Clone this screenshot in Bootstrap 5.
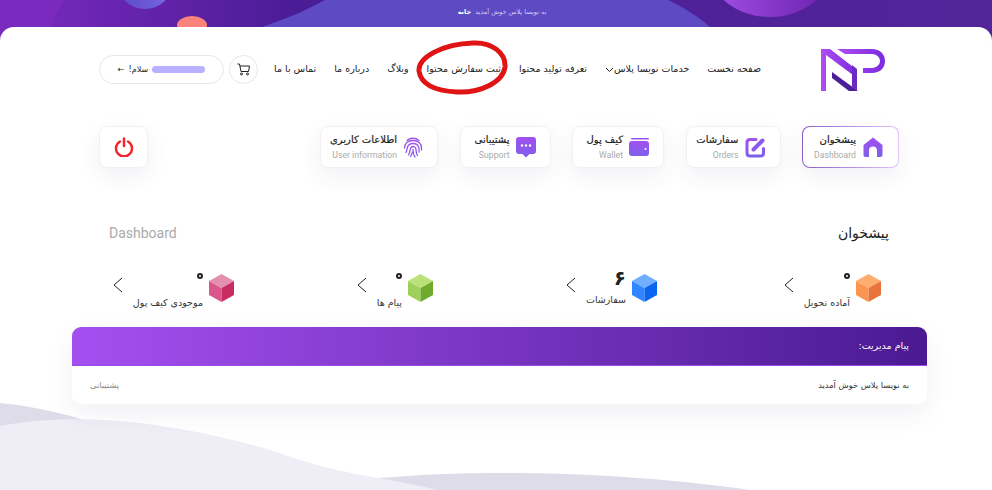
<!DOCTYPE html>
<html lang="fa" dir="rtl">
<head>
  <meta charset="UTF-8">
  <meta name="viewport" content="width=device-width, initial-scale=1.0">
  <title>نویسا پلاس</title>
  <link href="https://cdn.jsdelivr.net/npm/bootstrap@5.3.0/dist/css/bootstrap.min.css" rel="stylesheet">
  <style>
    html, body { height: 490px; overflow: hidden; }
    body {
      font-family: "DejaVu Sans", "Noto Sans", sans-serif;
      color: #222;
      background: linear-gradient(90deg, #7b2abf 0%, #4a1c96 30%, #52259b 100%);
    }
    .top-band { height: 27px; position: relative; overflow: hidden; }
    .band-art { position: absolute; inset: 0; width: 100%; height: 100%; }
    .band-text { position: relative; height: 25px; padding-left: 12px; font-size: 6.5px; color: #d5cff0; }
    .band-text b { color: #fff; }
    .panel {
      height: 463px;
      background: #fff;
      border-radius: 14px 14px 0 0;
      position: relative;
      overflow: hidden;
    }
    .waves { position: absolute; left: 0; bottom: 0; }
    .inner { position: relative; width: 800px; margin-left: 99px; margin-right: 93px; }
    .head-row { height: 71px; padding-top: 21px; }
    .site-logo { margin-left: 60px; margin-right: 13px; }
    .site-nav a { color: #222; font-size: 9.5px; text-decoration: none; white-space: nowrap; }
    .site-nav { gap: 18px; height: 29px; margin-top: 7px; position: relative; }
    .head-tools { gap: 5px; margin-top: 7px; }
    .round-cart {
      width: 29px; height: 29px; border: 1px solid #e6e6e6; border-radius: 50%;
      background: #fff; padding: 0;
    }
    .user-pill {
      width: 125px; height: 29px; border: 1px solid #e6e6e6; border-radius: 15px;
      background: #fff; font-size: 8px; color: #222; padding: 0;
    }
    .blur-name {
      width: 53px; height: 7px;
      background: #b9b0ff; border-radius: 4px; filter: blur(.6px);
    }
    .red-ring { position: absolute; left: 415px; top: 13px; pointer-events: none; }
    .tile-row { margin-top: 28px; gap: 21.5px; }
    .tile {
      height: 42px; background: #fff; border: 1px solid #f1f1f4; border-radius: 8px;
      box-shadow: 0 8px 22px rgba(60, 50, 110, .07);
      text-decoration: none; padding: 0 14px 0 4px; gap: 6px;
    }
    .tile.on {
      border: 1.5px solid transparent;
      background: linear-gradient(#fff, #fff) padding-box, linear-gradient(90deg, #8a5cc8, #e0c4fa) border-box;
    }
    .tile-fa { font-size: 10px; color: #222; line-height: 14px; white-space: nowrap; -webkit-text-stroke: .2px #222; }
    .tile-en { font-family: Roboto, sans-serif; font-size: 8.7px; color: #aaa; line-height: 12px; margin-top: 2px; white-space: nowrap; }
    .tile-off { width: 49px; margin-right: auto; justify-content: center; padding: 0; }
    .title-row { margin-top: 53px; padding: 0 10px; height: 24px; }
    .title-fa { font-size: 14px; color: #222; margin: 0; }
    .title-en { font-family: Roboto, sans-serif; font-size: 14px; color: #aaa; }
    .stat-row { margin-top: 23px; height: 40px; padding-right: 18px; }
    .stat-a { width: 224px; }
    .stat-b { width: 199px; }
    .stat-one { gap: 6px; }
    .stat-num { font-size: 20px; font-weight: 700; line-height: 16px; height: 24px; }
    .stat-zero { display: block; width: 6px; height: 6px; border: 2px solid #222; border-radius: 50%; margin-top: 6px; }
    .stat-lab { font-size: 9.500px; color: #333; line-height: 12px; white-space: nowrap; }
    .stat-go { margin-right: 4px; margin-bottom: 6px; }
    .note-card {
      margin: 19px -28px 0 0; width: 855px; height: 77px; border: 0; border-radius: 9px;
      box-shadow: 0 10px 26px rgba(60, 50, 110, .07); overflow: hidden;
    }
    .note-head {
      height: 39px; padding: 0 18px; font-size: 9.500px; color: #fff; border-bottom: 1px solid #9a4be4;
      background: linear-gradient(270deg, #4a1a92 0%, #a54ff0 100%);
    }
    .note-body { height: 38px; padding: 0 18px; font-size: 8.300px; color: #333; }
    .note-body span + span { color: #888; }
  </style>
</head>
<body>
  <div class="top-band">
    <svg class="band-art" viewBox="0 0 992 27" preserveAspectRatio="none">
      <defs>
        <linearGradient id="ballRight" x1="0" x2="1"><stop offset="0" stop-color="#a34fe6"/><stop offset="1" stop-color="#6a22ad"/></linearGradient>
        <linearGradient id="ballLeft" x1="0" x2="1"><stop offset="0" stop-color="#5a4bc4"/><stop offset="1" stop-color="#7a66e0"/></linearGradient>
        <linearGradient id="tileGrad" x1="0" x2="0" y1="0" y2="1"><stop offset="0" stop-color="#a24ff0"/><stop offset="1" stop-color="#7d60ea"/></linearGradient>
      </defs>
      <path d="M0 27V0H64C58 10 54 20 52 27Z" fill="#7b2abf"/>
      <path d="M262 27C290 18 310 8 325 0H668C685 8 700 18 710 27Z" fill="#5e4bc4"/>
      <ellipse cx="145" cy="-14" rx="26" ry="23" fill="url(#ballLeft)"/>
      <ellipse cx="770" cy="-30" rx="60" ry="47" fill="url(#ballRight)"/>
      <ellipse cx="192" cy="25" rx="15" ry="9" fill="#f9837c"/>
    </svg>
    <div class="band-text d-flex align-items-center justify-content-center gap-1">
      <span>به نویسا پلاس خوش آمدید</span><b>خانه</b>
    </div>
  </div>

  <div class="panel">
    <svg class="waves" width="992" height="90" viewBox="0 400 992 90">
      <path d="M0 403C30 406 60 412 90 422L100 490H0Z" fill="#dfdcea"/>
      <path d="M380 490V478C470 470 610 470 750 490Z" fill="#dfdcea"/>
      <path d="M0 426C40 418 90 417 140 423C200 431 250 442 300 460C350 476 400 480 437 490H0Z" fill="#efedf5"/>
    </svg>

    <div class="inner">
      <div class="head-row d-flex align-items-start">
        <a class="site-logo" href="#">
          <svg width="65" height="44" viewBox="0 0 65 44">
            <defs><linearGradient id="logoGrad" x1="0" x2="1"><stop offset="0" stop-color="#b14df0"/><stop offset="1" stop-color="#7a2be0"/></linearGradient></defs>
            <path d="M0 1H9L36 22V30L5 7V43H0Z" fill="url(#logoGrad)"/>
            <path d="M11 24L37 43H28L11 30Z" fill="#4a1f98"/>
            <path d="M16 1H51C59 1 64 6 64 13S59 25 51 25H42V20H51C55 20 59 17 59 13S55 6 51 6H24Z" fill="url(#logoGrad)"/>
            <path d="M31 17L36 21V43L31 39Z" fill="#6a2bc4"/>
          </svg>
        </a>
        <nav class="site-nav d-flex align-items-center">
          <a href="#">صفحه نخست</a>
          <a href="#">خدمات نویسا پلاس<svg width="9" height="6" viewBox="0 0 9 6"><path d="M1 1L4.500 4.500L8 1" fill="none" stroke="#222"/></svg></a>
          <a href="#">تعرفه تولید محتوا</a>
          <a href="#">ثبت سفارش محتوا</a>
          <a href="#">وبلاگ</a>
          <a href="#">درباره ما</a>
          <a href="#">تماس با ما</a>
        </nav>
        <div class="head-tools d-flex me-auto">
          <button class="round-cart d-flex align-items-center justify-content-center" type="button">
            <svg width="13" height="13" viewBox="0 0 13 13" fill="none" stroke="#222"><path d="M.5 1H2.500L4 8.500H11.500L12.500 3H3"/><circle cx="4.500" cy="11" r="1"/><circle cx="10.500" cy="11" r="1"/></svg>
          </button>
          <button class="user-pill d-flex align-items-center justify-content-center gap-1" type="button">
            <span class="blur-name"></span><span>سلام!</span><span>←</span>
          </button>
        </div>
      </div>

      <div class="tile-row d-flex">
        <a class="tile on d-flex align-items-center" href="#" style="width:97px">
          <svg width="22" height="22" viewBox="0 0 22 22"><path d="M11 1.500L20.500 9V19Q20.500 21 18.500 21H15V14.500C15 12 13.500 10.500 11 10.500S7 12 7 14.500V21H3.500Q1.500 21 1.500 19V9Z" fill="url(#tileGrad)"/></svg>
          <div><div class="tile-fa">پیشخوان</div><div class="tile-en">Dashboard</div></div>
        </a>
        <a class="tile d-flex align-items-center" href="#" style="width:95px">
          <svg width="21" height="21" viewBox="0 0 21 21" fill="none" stroke="url(#tileGrad)" stroke-width="3" stroke-linecap="round"><path d="M11 2.500H5Q2 2.500 2 5.500V16Q2 19 5 19H15.500Q18.500 19 18.500 16V11.500"/><path d="M8.500 12.500L17.500 3.500" stroke="#8f58ec" stroke-width="4"/></svg>
          <div><div class="tile-fa">سفارشات</div><div class="tile-en">Orders</div></div>
        </a>
        <a class="tile d-flex align-items-center" href="#" style="width:92px">
          <svg width="20" height="18" viewBox="0 0 20 18"><rect y="3" width="20" height="15" rx="3" fill="url(#tileGrad)"/><rect x="2" width="18" height="1.500" rx=".7" fill="#a24ff0"/><circle cx="16.500" cy="11" r="1" fill="#fff"/></svg>
          <div><div class="tile-fa">کیف پول</div><div class="tile-en">Wallet</div></div>
        </a>
        <a class="tile d-flex align-items-center" href="#" style="width:91px">
          <svg width="20" height="21" viewBox="0 0 20 21"><path d="M3 0H17Q20 0 20 3V14Q20 17 17 17H13.500L10 20.500L6.500 17H3Q0 17 0 14V3Q0 0 3 0Z" fill="url(#tileGrad)"/><circle cx="6" cy="8.500" r="1.200" fill="#fff"/><circle cx="10" cy="8.500" r="1.200" fill="#fff"/><circle cx="14" cy="8.500" r="1.200" fill="#fff"/></svg>
          <div><div class="tile-fa">پشتیبانی</div><div class="tile-en">Support</div></div>
        </a>
        <a class="tile d-flex align-items-center" href="#" style="width:118px">
          <svg width="20" height="21" viewBox="0 0 20 21" fill="none" stroke="url(#tileGrad)" stroke-width="1.300" stroke-linecap="round"><path d="M4 3.500C7.500 .5 12.500 .5 16 3.500"/><path d="M1.500 11C1.500 6.500 5 3.500 10 3.500S18.500 6.500 18.500 11V13"/><path d="M3 15.500C4 13 4 11.500 4.500 10C5.500 7.500 7.500 6.500 10 6.500S15.500 8 16 11.500V15"/><path d="M5.500 18C7 15.500 7 13 7.500 11.500S9 9.500 10 9.500 13 10.500 13 12.500 13.500 17 14.500 18.500"/><path d="M10 12.500C10 15.500 10.500 18 12 20"/><path d="M7.500 19.500C8.500 18 9 16.500 9.500 15"/></svg>
          <div><div class="tile-fa">اطلاعات کاربری</div><div class="tile-en">User information</div></div>
        </a>
        <a class="tile tile-off d-flex align-items-center" href="#">
          <svg width="20" height="20" viewBox="0 0 20 20" fill="none" stroke="#f2262b" stroke-width="2.500" stroke-linecap="round"><path d="M6 4.500A8 8 0 1 0 14 4.500"/><path d="M10 1.500V9"/></svg>
        </a>
      </div>

      <div class="title-row d-flex justify-content-between align-items-center">
        <h1 class="title-fa">پیشخوان</h1>
        <span class="title-en">Dashboard</span>
      </div>

      <div class="stat-row d-flex">
        <div class="stat-one stat-a d-flex align-items-center">
          <svg width="25" height="28" viewBox="0 0 25 28"><path d="M12.500 0L25 7L12.500 14L0 7Z" fill="#ffad6e"/><path d="M0 7L12.500 14V28L0 21Z" fill="#fb9550"/><path d="M25 7L12.500 14V28L25 21Z" fill="#e8743c"/></svg>
          <div><div class="stat-num"><i class="stat-zero"></i></div><div class="stat-lab">آماده تحویل</div></div>
          <svg class="stat-go" width="10" height="16" viewBox="0 0 10 16"><path d="M9 1L1 8L9 15" fill="none" stroke="#222"/></svg>
        </div>
        <div class="stat-one stat-a d-flex align-items-center">
          <svg width="25" height="28" viewBox="0 0 25 28"><path d="M12.500 0L25 7L12.500 14L0 7Z" fill="#70aeff"/><path d="M0 7L12.500 14V28L0 21Z" fill="#2f86ff"/><path d="M25 7L12.500 14V28L25 21Z" fill="#0a66f0"/></svg>
          <div><div class="stat-num">۶</div><div class="stat-lab">سفارشات</div></div>
          <svg class="stat-go" width="10" height="16" viewBox="0 0 10 16"><path d="M9 1L1 8L9 15" fill="none" stroke="#222"/></svg>
        </div>
        <div class="stat-one stat-b d-flex align-items-center">
          <svg width="25" height="28" viewBox="0 0 25 28"><path d="M12.500 0L25 7L12.500 14L0 7Z" fill="#bbe278"/><path d="M0 7L12.500 14V28L0 21Z" fill="#9fd05a"/><path d="M25 7L12.500 14V28L25 21Z" fill="#6eaa2c"/></svg>
          <div><div class="stat-num"><i class="stat-zero"></i></div><div class="stat-lab">پیام ها</div></div>
          <svg class="stat-go" width="10" height="16" viewBox="0 0 10 16"><path d="M9 1L1 8L9 15" fill="none" stroke="#222"/></svg>
        </div>
        <div class="stat-one d-flex align-items-center">
          <svg width="25" height="28" viewBox="0 0 25 28"><path d="M12.500 0L25 7L12.500 14L0 7Z" fill="#e58fb0"/><path d="M0 7L12.500 14V28L0 21Z" fill="#d9578a"/><path d="M25 7L12.500 14V28L25 21Z" fill="#c82a62"/></svg>
          <div><div class="stat-num"><i class="stat-zero"></i></div><div class="stat-lab">موجودی کیف پول</div></div>
          <svg class="stat-go" width="10" height="16" viewBox="0 0 10 16"><path d="M9 1L1 8L9 15" fill="none" stroke="#222"/></svg>
        </div>
      </div>

      <div class="card note-card">
        <div class="note-head d-flex align-items-center">پیام مدیریت:</div>
        <div class="note-body d-flex align-items-center justify-content-between">
          <span>به نویسا پلاس خوش آمدید</span><span>پشتیبانی</span>
        </div>
      </div>
    </div>

    <svg class="red-ring" width="94" height="56" viewBox="0 0 94 56" fill="none" stroke="#e01414" stroke-width="5" stroke-linecap="round">
      <path d="M4 31C3 17 28 4 58 3C77 2 91 13 90 27C88 42 66 53 42 52C22 51 6 45 4 31Z"/>
    </svg>
  </div>
</body>
</html>
